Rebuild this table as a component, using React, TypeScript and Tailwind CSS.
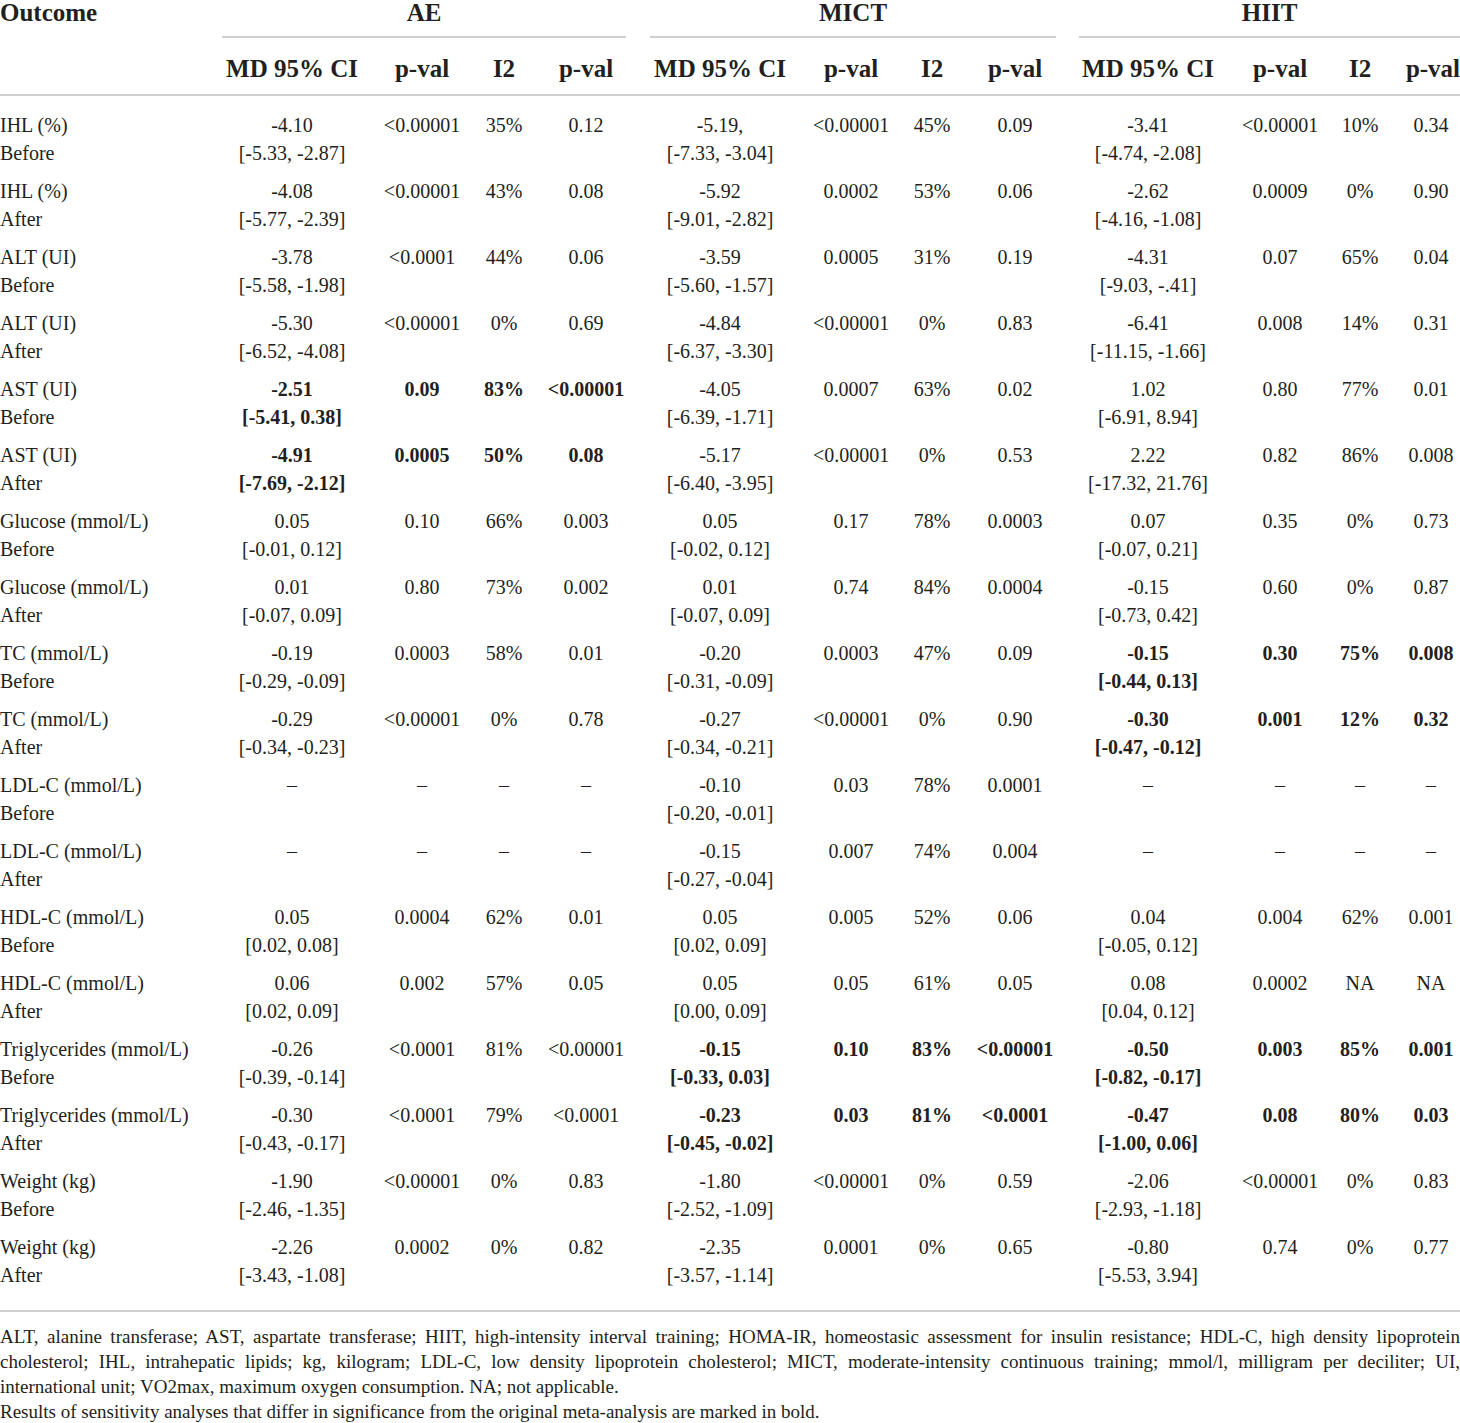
type Group = { md: string; ci: string; p: string; i2: string; p2: string; bold?: boolean } | null

type Row = { label: string; when: string; ae: Group; mict: Group; hiit: Group }

const g = (md: string, ci: string, p: string, i2: string, p2: string, bold = false): Group => ({ md, ci, p, i2, p2, bold })

const rows: Row[] = [
  { label: "IHL (%)", when: "Before", ae: g("-4.10", "[-5.33, -2.87]", "<0.00001", "35%", "0.12"), mict: g("-5.19,", "[-7.33, -3.04]", "<0.00001", "45%", "0.09"), hiit: g("-3.41", "[-4.74, -2.08]", "<0.00001", "10%", "0.34") },
  { label: "IHL (%)", when: "After", ae: g("-4.08", "[-5.77, -2.39]", "<0.00001", "43%", "0.08"), mict: g("-5.92", "[-9.01, -2.82]", "0.0002", "53%", "0.06"), hiit: g("-2.62", "[-4.16, -1.08]", "0.0009", "0%", "0.90") },
  { label: "ALT (UI)", when: "Before", ae: g("-3.78", "[-5.58, -1.98]", "<0.0001", "44%", "0.06"), mict: g("-3.59", "[-5.60, -1.57]", "0.0005", "31%", "0.19"), hiit: g("-4.31", "[-9.03, -.41]", "0.07", "65%", "0.04") },
  { label: "ALT (UI)", when: "After", ae: g("-5.30", "[-6.52, -4.08]", "<0.00001", "0%", "0.69"), mict: g("-4.84", "[-6.37, -3.30]", "<0.00001", "0%", "0.83"), hiit: g("-6.41", "[-11.15, -1.66]", "0.008", "14%", "0.31") },
  { label: "AST (UI)", when: "Before", ae: g("-2.51", "[-5.41, 0.38]", "0.09", "83%", "<0.00001", true), mict: g("-4.05", "[-6.39, -1.71]", "0.0007", "63%", "0.02"), hiit: g("1.02", "[-6.91, 8.94]", "0.80", "77%", "0.01") },
  { label: "AST (UI)", when: "After", ae: g("-4.91", "[-7.69, -2.12]", "0.0005", "50%", "0.08", true), mict: g("-5.17", "[-6.40, -3.95]", "<0.00001", "0%", "0.53"), hiit: g("2.22", "[-17.32, 21.76]", "0.82", "86%", "0.008") },
  { label: "Glucose (mmol/L)", when: "Before", ae: g("0.05", "[-0.01, 0.12]", "0.10", "66%", "0.003"), mict: g("0.05", "[-0.02, 0.12]", "0.17", "78%", "0.0003"), hiit: g("0.07", "[-0.07, 0.21]", "0.35", "0%", "0.73") },
  { label: "Glucose (mmol/L)", when: "After", ae: g("0.01", "[-0.07, 0.09]", "0.80", "73%", "0.002"), mict: g("0.01", "[-0.07, 0.09]", "0.74", "84%", "0.0004"), hiit: g("-0.15", "[-0.73, 0.42]", "0.60", "0%", "0.87") },
  { label: "TC (mmol/L)", when: "Before", ae: g("-0.19", "[-0.29, -0.09]", "0.0003", "58%", "0.01"), mict: g("-0.20", "[-0.31, -0.09]", "0.0003", "47%", "0.09"), hiit: g("-0.15", "[-0.44, 0.13]", "0.30", "75%", "0.008", true) },
  { label: "TC (mmol/L)", when: "After", ae: g("-0.29", "[-0.34, -0.23]", "<0.00001", "0%", "0.78"), mict: g("-0.27", "[-0.34, -0.21]", "<0.00001", "0%", "0.90"), hiit: g("-0.30", "[-0.47, -0.12]", "0.001", "12%", "0.32", true) },
  { label: "LDL-C (mmol/L)", when: "Before", ae: null, mict: g("-0.10", "[-0.20, -0.01]", "0.03", "78%", "0.0001"), hiit: null },
  { label: "LDL-C (mmol/L)", when: "After", ae: null, mict: g("-0.15", "[-0.27, -0.04]", "0.007", "74%", "0.004"), hiit: null },
  { label: "HDL-C (mmol/L)", when: "Before", ae: g("0.05", "[0.02, 0.08]", "0.0004", "62%", "0.01"), mict: g("0.05", "[0.02, 0.09]", "0.005", "52%", "0.06"), hiit: g("0.04", "[-0.05, 0.12]", "0.004", "62%", "0.001") },
  { label: "HDL-C (mmol/L)", when: "After", ae: g("0.06", "[0.02, 0.09]", "0.002", "57%", "0.05"), mict: g("0.05", "[0.00, 0.09]", "0.05", "61%", "0.05"), hiit: g("0.08", "[0.04, 0.12]", "0.0002", "NA", "NA") },
  { label: "Triglycerides (mmol/L)", when: "Before", ae: g("-0.26", "[-0.39, -0.14]", "<0.0001", "81%", "<0.00001"), mict: g("-0.15", "[-0.33, 0.03]", "0.10", "83%", "<0.00001", true), hiit: g("-0.50", "[-0.82, -0.17]", "0.003", "85%", "0.001", true) },
  { label: "Triglycerides (mmol/L)", when: "After", ae: g("-0.30", "[-0.43, -0.17]", "<0.0001", "79%", "<0.0001"), mict: g("-0.23", "[-0.45, -0.02]", "0.03", "81%", "<0.0001", true), hiit: g("-0.47", "[-1.00, 0.06]", "0.08", "80%", "0.03", true) },
  { label: "Weight (kg)", when: "Before", ae: g("-1.90", "[-2.46, -1.35]", "<0.00001", "0%", "0.83"), mict: g("-1.80", "[-2.52, -1.09]", "<0.00001", "0%", "0.59"), hiit: g("-2.06", "[-2.93, -1.18]", "<0.00001", "0%", "0.83") },
  { label: "Weight (kg)", when: "After", ae: g("-2.26", "[-3.43, -1.08]", "0.0002", "0%", "0.82"), mict: g("-2.35", "[-3.57, -1.14]", "0.0001", "0%", "0.65"), hiit: g("-0.80", "[-5.53, 3.94]", "0.74", "0%", "0.77") },
]

// column widths chosen so centred text lands where the reference has it
const widths = ["w-[222px]", "w-[140px]", "w-[120px]", "w-[44px]", "w-[120px]", "w-[148px]", "w-[114px]", "w-[48px]", "w-[118px]", "w-[148px]", "w-[116px]", "w-[64px]", "w-[58px]"]

function GroupCells({ data, last }: { data: Group; last?: boolean }) {
  const i2Pad = last ? "pr-[20px]" : ""
  if (!data) {
    return (
      <>
        <td className="align-top text-center">–</td>
        <td className="align-top text-center">–</td>
        <td className={`align-top text-center ${i2Pad}`}>–</td>
        <td className="align-top text-center">–</td>
      </>
    )
  }
  const b = data.bold ? "font-bold" : ""
  return (
    <>
      <td className={`align-top text-center whitespace-nowrap ${b}`}>
        <div>{data.md}</div>
        <div>{data.ci}</div>
      </td>
      <td className={`align-top text-center ${b}`}>{data.p}</td>
      <td className={`align-top text-center ${i2Pad} ${b}`}>{data.i2}</td>
      <td className={`align-top text-center ${b}`}>{data.p2}</td>
    </>
  )
}

export default function App() {
  const subHeads = ["MD 95% CI", "p-val", "I2", "p-val"]
  return (
    <div className="w-[1460px] bg-white text-[#231f20] font-['Liberation_Serif',serif] text-[20px] leading-[28px]">
      <table className="table-fixed w-[1460px] border-collapse">
        <colgroup>
          {widths.map((w, i) => (
            <col key={i} className={w} />
          ))}
        </colgroup>
        <thead className="text-[25px] font-bold">
          <tr>
            <th rowSpan={2} className="align-top text-left leading-[26px] pt-0 border-b-2 border-[#cfcfcf]">
              Outcome
            </th>
            <th colSpan={4} className="p-0 align-top">
              <div className="mr-[20px] leading-[26px] pb-[10px] border-b-2 border-[#cfcfcf]">AE</div>
            </th>
            <th colSpan={4} className="p-0 align-top">
              <div className="ml-[4px] mr-[18px] leading-[26px] pb-[10px] border-b-2 border-[#cfcfcf]">MICT</div>
            </th>
            <th colSpan={4} className="p-0 align-top">
              <div className="ml-[5px] leading-[26px] pb-[10px] border-b-2 border-[#cfcfcf]">HIIT</div>
            </th>
          </tr>
          <tr className="border-b-2 border-[#cfcfcf]">
            {[0, 1, 2].map((gi) =>
              subHeads.map((h, i) => (
                <th
                  key={`${gi}-${i}`}
                  className={`pt-[17px] pb-[11px] text-center whitespace-nowrap ${gi === 2 && i === 2 ? "pr-[20px]" : ""} ${gi === 2 && i === 3 ? "text-right" : ""}`}
                >
                  {h}
                </th>
              ))
            )}
          </tr>
        </thead>
        <tbody>
          <tr>
            <td colSpan={13} className="h-[11px] p-0" />
          </tr>
          {rows.map((r, i) => (
            <tr key={i} className="[&>td]:py-[5px]">
              <td className="align-top text-left whitespace-nowrap">
                <div>{r.label}</div>
                <div>{r.when}</div>
              </td>
              <GroupCells data={r.ae} />
              <GroupCells data={r.mict} />
              <GroupCells data={r.hiit} last />
            </tr>
          ))}
          <tr className="border-b-2 border-[#cfcfcf]">
            <td colSpan={13} className="h-[17px] p-0" />
          </tr>
        </tbody>
      </table>
      <div className="pt-[12px] text-[19px] leading-[25px] text-justify">
        <p className="[text-align-last:justify]">
          ALT, alanine transferase; AST, aspartate transferase; HIIT, high-intensity interval training; HOMA-IR, homeostasic
          assessment for insulin resistance; HDL-C, high density lipoprotein cholesterol; IHL, intrahepatic lipids; kg, kilogram;
          LDL-C, low density lipoprotein cholesterol; MICT, moderate-intensity continuous training; mmol/l, milligram per
          deciliter; UI,
        </p>
        <p>international unit; VO2max, maximum oxygen consumption. NA; not applicable.</p>
        <p>Results of sensitivity analyses that differ in significance from the original meta-analysis are marked in bold.</p>
      </div>
    </div>
  )
}
